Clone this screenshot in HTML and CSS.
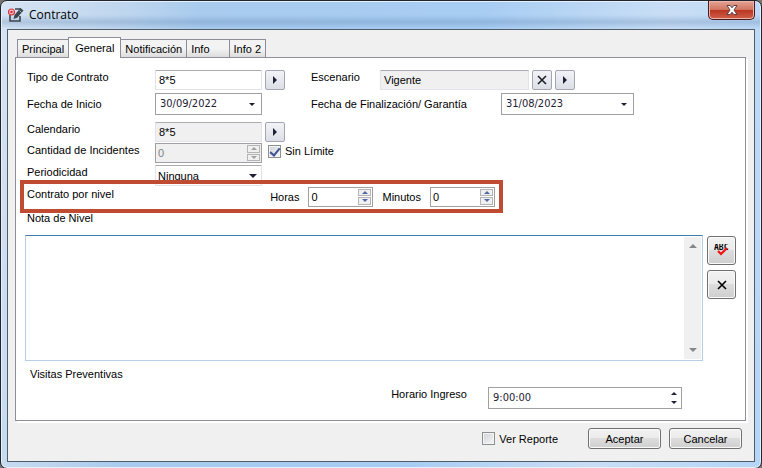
FILE: index.html
```html
<!DOCTYPE html>
<html lang="es">
<head>
    <meta charset="UTF-8">
    <meta name="viewport" content="width=device-width, initial-scale=1.0">
    <title>Contrato</title>
    <link rel="stylesheet" href="styles.css">
</head>
<body>
    <div class="window">
        <header class="titlebar">
            <svg class="app-icon" width="16" height="16" viewBox="0 0 16 16">
                <path d="M7 2h6M2 8v6h10V9" fill="none" stroke="#3c4650" stroke-width="1.600"/>
                <path d="M5.500 12l1-4L12.500 1 15.500 3.500 9.500 10.500z" fill="#3c4650"/>
                <path d="M11.500 3.500l2 2" stroke="#c4d6e8" stroke-width=".8"/>
                <circle cx="3.500" cy="5" r="3" fill="#f3c6c6" stroke="#d8323c" stroke-width="1.200"/>
                <circle cx="3.500" cy="5" r="1.300" fill="#d8323c"/>
            </svg>
            <h1>Contrato</h1>
            <button type="button" class="close" aria-label="Cerrar">
                <svg width="12" height="10" viewBox="0 0 12 10">
                    <path d="M1 .5h3.200L6 2.800 7.800.5H11L8 5l3 4.500H7.800L6 7.200 4.200 9.500H1L4 5z" fill="#fff" stroke="#5a4046" stroke-width="1"/>
                </svg>
            </button>
        </header>

        <form class="client">
            <nav class="tabs">
                <button type="button" class="tab">Principal</button>
                <button type="button" class="tab active">General</button>
                <button type="button" class="tab">Notificación</button>
                <button type="button" class="tab tab-wide">Info</button>
                <button type="button" class="tab">Info 2</button>
            </nav>

            <section class="panel">
                <div class="row">
                    <label class="name" for="tipo">Tipo de Contrato</label>
                    <input class="field" type="text" id="tipo" value="8*5">
                    <button type="button" class="mini" aria-label="Buscar tipo"><i class="arrow right"></i></button>
                    <label class="name second" for="escenario">Escenario</label>
                    <input class="field scenario" type="text" id="escenario" value="Vigente" readonly>
                    <button type="button" class="mini" aria-label="Quitar escenario">
                        <svg width="10" height="10" viewBox="0 0 10 10"><path d="M1 1l8 8M9 1L1 9" stroke="#1e1e28" stroke-width="1.600"/></svg>
                    </button>
                    <button type="button" class="mini" aria-label="Buscar escenario"><i class="arrow right"></i></button>
                </div>

                <div class="row dates">
                    <label class="name" for="inicio">Fecha de Inicio</label>
                    <div class="box date">
                        <input type="text" id="inicio" value="30/09/2022">
                        <button type="button" class="drop" aria-label="Abrir calendario"><i class="arrow down"></i></button>
                    </div>
                    <label class="name wide" for="fin">Fecha de Finalización/ Garantía</label>
                    <div class="box date end">
                        <input type="text" id="fin" value="31/08/2023">
                        <button type="button" class="drop" aria-label="Abrir calendario"><i class="arrow down"></i></button>
                    </div>
                </div>

                <div class="row group">
                    <label class="name" for="calendario">Calendario</label>
                    <input class="field" type="text" id="calendario" value="8*5" readonly>
                    <button type="button" class="mini" aria-label="Buscar calendario"><i class="arrow right"></i></button>
                </div>

                <div class="row tight">
                    <label class="name" for="cantidad">Cantidad de Incidentes</label>
                    <div class="box spinner disabled">
                        <input type="text" id="cantidad" value="0" disabled>
                        <div class="spin">
                            <button type="button" aria-label="Subir" disabled><i class="arrow up"></i></button>
                            <button type="button" aria-label="Bajar" disabled><i class="arrow down"></i></button>
                        </div>
                    </div>
                    <label class="check limit"><input type="checkbox" checked>Sin Límite</label>
                </div>

                <div class="row">
                    <label class="name" for="periodicidad">Periodicidad</label>
                    <div class="select">
                        <select class="field" id="periodicidad">
                            <option>Ninguna</option>
                        </select>
                        <i class="arrow down"></i>
                    </div>
                </div>

                <div class="highlight">
                    <span class="name level">Contrato por nivel</span>
                    <label for="horas">Horas</label>
                    <div class="box spinner small">
                        <input type="text" id="horas" value="0">
                        <div class="spin">
                            <button type="button" aria-label="Subir"><i class="arrow up"></i></button>
                            <button type="button" aria-label="Bajar"><i class="arrow down"></i></button>
                        </div>
                    </div>
                    <label for="minutos">Minutos</label>
                    <div class="box spinner small">
                        <input type="text" id="minutos" value="0">
                        <div class="spin">
                            <button type="button" aria-label="Subir"><i class="arrow up"></i></button>
                            <button type="button" aria-label="Bajar"><i class="arrow down"></i></button>
                        </div>
                    </div>
                </div>

                <label class="note-label" for="nota">Nota de Nivel</label>
                <div class="note">
                    <div class="note-box">
                        <textarea id="nota"></textarea>
                        <div class="scroll"><i class="arrow up"></i><i class="arrow down"></i></div>
                    </div>
                    <div class="tools">
                        <button type="button" class="tool" aria-label="Ortografía">
                            <svg width="16" height="14" viewBox="0 0 16 14">
                                <text x="0" y="6" class="abc">ABC</text>
                                <path d="M4 7l3 3 6-6" fill="none" stroke="#f01010" stroke-width="2.200"/>
                            </svg>
                        </button>
                        <button type="button" class="tool" aria-label="Borrar nota">
                            <svg width="10" height="10" viewBox="0 0 10 10"><path d="M1 1l8 8M9 1L1 9" stroke="#000" stroke-width="1.600"/></svg>
                        </button>
                    </div>
                </div>

                <h2>Visitas Preventivas</h2>
                <div class="entry">
                    <label for="ingreso">Horario Ingreso</label>
                    <div class="box time">
                        <input type="text" id="ingreso" value="9:00:00">
                        <div class="spin plain">
                            <button type="button" aria-label="Subir"><i class="arrow up"></i></button>
                            <button type="button" aria-label="Bajar"><i class="arrow down"></i></button>
                        </div>
                    </div>
                </div>
            </section>

            <footer class="actions">
                <label class="check"><input type="checkbox">Ver Reporte</label>
                <button type="submit" class="action">Aceptar</button>
                <button type="button" class="action">Cancelar</button>
            </footer>
        </form>
    </div>
</body>
</html>
```

FILE: styles.css
```css
* {
    box-sizing: border-box;
}

body {
    margin: 0;
    background: #77736f;
    font: 11px/14px "Liberation Sans", Arial, sans-serif;
    color: #000;
}

button,
input,
select,
textarea {
    margin: 0;
    padding: 0;
    font: inherit;
    color: inherit;
}

button {
    display: flex;
    align-items: center;
    justify-content: center;
}

svg {
    display: block;
}

/* Ventana */
.window {
    display: flex;
    flex-direction: column;
    min-height: 100vh;
    padding: 0 6px 6px;
    border: 1px solid #22252e;
    border-radius: 7px;
    background:
        linear-gradient(transparent 14px, rgba(90, 130, 175, 0.3) 21px, transparent 28px),
        linear-gradient(100deg, #d6e4f3 0, #bdd5ee 130px, #a8cbee 200px, #a8cdf3 480px, #c9def5 660px, #b4d5f7 100%);
    box-shadow: inset 0 0 0 1px #e4f1fc;
}

.titlebar {
    display: flex;
    align-items: center;
    height: 28px;
    padding-left: 1px;
}

.titlebar h1 {
    flex: 1;
    margin: 0 0 0 5px;
    font: 12px/16px "Open Sans", "Noto Sans", sans-serif;
}

.close {
    align-self: flex-start;
    width: 47px;
    height: 19px;
    border: 1px solid #4a1a20;
    border-top: 0;
    border-radius: 0 0 5px 5px;
    background: linear-gradient(#e3a497, #d0755f 48%, #b83520 50%, #d0604a);
    box-shadow: inset 0 0 0 1px #eab5a8;
}

.client {
    display: flex;
    flex: 1;
    flex-direction: column;
    padding: 7px 8px 12px 7px;
    border: 1px solid #4f5d6b;
    background: #f0f0f0;
}

/* Pestañas */
.tabs {
    display: flex;
    align-items: flex-end;
    height: 20px;
    padding-left: 2px;
}

.tab {
    height: 18px;
    padding: 0 4px;
    border: 1px solid #8c8e99;
    border-bottom: 0;
    border-right-width: 0;
    background: linear-gradient(#f3f3f3 50%, #dddddd);
}

.tab:last-child {
    border-right-width: 1px;
}

.tab-wide {
    padding-right: 19px;
}

.tab.active {
    position: relative;
    height: 21px;
    margin-bottom: -1px;
    padding: 0 6px;
    border-right-width: 1px;
    background: #fff;
}

.tab.active + .tab {
    border-left-width: 0;
}

.panel {
    flex: 1;
    padding: 12px 9px 11px 9px;
    border: 1px solid #8c8e99;
    background: #fff;
    box-shadow: 2px 2px 0 #fff;
}

/* Filas del formulario */
.row {
    display: flex;
    align-items: flex-start;
    gap: 3px;
    margin-bottom: 3px;
    padding-left: 2px;
}

.row.dates {
    align-items: center;
}

.row.group {
    margin-top: 7px;
    margin-bottom: 1px;
}

.row.tight {
    margin-bottom: 2px;
}

.name {
    width: 125px;
    white-space: nowrap;
}

.name.second {
    width: 66px;
    margin-left: 23px;
}

.name.wide {
    width: 187px;
    margin-left: 46px;
}

.field {
    width: 107px;
    height: 20px;
    padding: 0 3px;
    border: 1px solid #e2e3ea;
    border-top-color: #abadb3;
    border-radius: 1px;
    background: #fff;
}

.field:read-only:not(select) {
    background: #f0f0f0;
}

.scenario {
    width: 149px;
}

.mini {
    width: 20px;
    height: 20px;
    border: 1px solid #a3a5b2;
    border-radius: 2px;
    background: linear-gradient(#f2f3f7, #dcdee8);
}

.box {
    display: flex;
    width: 107px;
    height: 20px;
    border: 1px solid #a0a0a0;
    background: #fff;
}

.box input {
    flex: 1;
    min-width: 0;
    padding-left: 2px;
    border: 0;
    background: transparent;
}

.date,
.time {
    height: 22px;
    color: #1e2035;
    font-family: "DejaVu Sans Condensed", "DejaVu Sans", sans-serif;
}

.date input,
.time input {
    padding-left: 4px;
}

.date.end {
    width: 133px;
}

.drop {
    width: 18px;
    border: 0;
    background: none;
}

.drop .arrow {
    border-width: 3px;
}

.spin {
    display: flex;
    flex-direction: column;
    gap: 1px;
    width: 15px;
    padding: 1px;
}

.spin button {
    flex: 1;
    min-height: 0;
    border: 1px solid #b4b4b4;
    background: #f0f0f0;
}

.spin .arrow {
    border-width: 3px;
    color: #5068a8;
}

.spin.plain button {
    border: 0;
    background: none;
}

.spin.plain .arrow {
    color: #1e2035;
}

.disabled {
    background: #f0f0f0;
    color: #808080;
}

.disabled .arrow {
    color: #a0a0a0;
}

.select {
    position: relative;
}

.select select {
    display: block;
    height: 21px;
    padding: 0 2px;
    appearance: none;
}

.select .arrow {
    position: absolute;
    top: 9px;
    right: 5px;
    pointer-events: none;
}

.check {
    display: flex;
    align-items: center;
    gap: 4px;
}

.check.limit {
    margin: 1px 0 0 3px;
}

.check input {
    display: grid;
    place-items: center;
    width: 13px;
    height: 13px;
    border: 1px solid #8e8f8f;
    background: linear-gradient(135deg, #cfd3da, #f6f6f6);
    box-shadow: inset 0 0 0 1px #f4f4f4;
    appearance: none;
}

.check input:checked::before {
    content: "";
    width: 4px;
    height: 8px;
    border: solid #3d5393;
    border-width: 0 2px 2px 0;
    transform: rotate(40deg);
}

/* Flechas */
.arrow {
    width: 0;
    height: 0;
    border: 4px solid transparent;
    color: #1e2035;
}

.arrow.right {
    border-right: 0;
    border-left-color: currentColor;
}

.arrow.down {
    border-bottom: 0;
    border-top-color: currentColor;
}

.arrow.up {
    border-top: 0;
    border-bottom-color: currentColor;
}

/* Contrato por nivel */
.highlight {
    position: relative;
    display: flex;
    align-items: center;
    gap: 9px;
    width: 483px;
    height: 33px;
    margin: -9px 0 0 -5px;
    padding: 0 4px 0 3px;
    border: 4px solid #bf4b32;
}

.level {
    width: 235px;
    margin-bottom: 5px;
}

.small {
    width: 65px;
}

.note-label {
    display: block;
    margin: -2px 0 10px;
    padding-left: 2px;
}

.note {
    display: flex;
    gap: 4px;
}

.note-box {
    display: flex;
    flex: 1;
    height: 126px;
    padding: 1px;
    border: 1px solid #b5cfe7;
    border-top-color: #3d7bad;
}

.note-box textarea {
    flex: 1;
    border: 0;
    outline: 0;
    resize: none;
}

.scroll {
    display: flex;
    flex-direction: column;
    align-items: center;
    justify-content: space-between;
    width: 17px;
    padding: 7px 0;
    background: #f0f0f0;
}

.scroll .arrow {
    color: #868686;
}

.tools {
    display: flex;
    flex-direction: column;
    gap: 5px;
    padding-top: 1px;
}

.tool,
.action {
    border: 1px solid #707070;
    border-radius: 3px;
    background: linear-gradient(#f2f2f2, #ebebeb 49%, #dddddd 50%, #cfcfcf);
    box-shadow: inset 0 0 0 1px #fafafa;
}

.tool {
    width: 29px;
    height: 29px;
}

.abc {
    font: bold 8px "DejaVu Sans Mono", monospace;
}

.panel h2 {
    margin: 6px 0 6px 5px;
    font: inherit;
}

.entry {
    display: flex;
    justify-content: flex-end;
    gap: 21px;
    padding-right: 54px;
}

.time {
    width: 194px;
}

.actions {
    display: flex;
    align-items: center;
    justify-content: flex-end;
    gap: 8px;
    margin-top: 7px;
    padding-right: 4px;
}

.actions .check {
    margin-right: 22px;
}

.action {
    width: 73px;
    height: 21px;
}
```
